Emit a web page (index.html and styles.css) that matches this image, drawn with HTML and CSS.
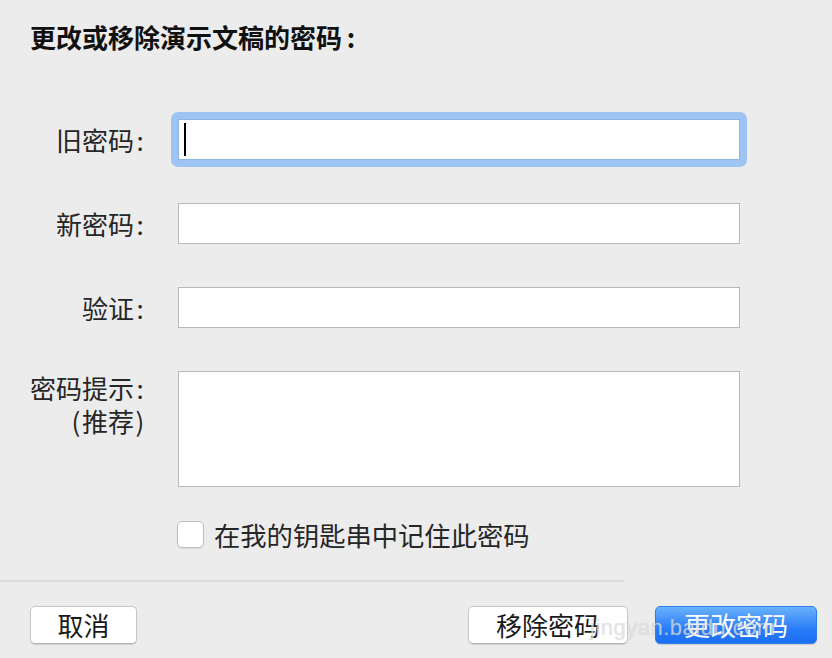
FILE: index.html
```html
<!DOCTYPE html>
<html lang="zh-CN">
<head>
<meta charset="utf-8">
<title>更改或移除演示文稿的密码</title>
<link rel="stylesheet" href="styles.css">
</head>
<body>
<div class="dialog">
  <h1 class="title">更改或移除演示文稿的密码<span class="colon colon-title">:</span></h1>
  <div class="form">
    <label class="label">旧密码<span class="colon">:</span></label>
    <div class="focus-ring"><div class="field field-focused"><span class="caret"></span></div></div>

    <label class="label">新密码<span class="colon">:</span></label>
    <div class="field"></div>

    <label class="label">验证<span class="colon">:</span></label>
    <div class="field"></div>

    <label class="label label-top">
      <span class="label-line">密码提示<span class="colon">:</span></span>
      <span class="label-line"><span class="paren">(</span>推荐<span class="paren">)</span></span>
    </label>
    <div class="field field-area"></div>
  </div>

  <div class="check-row">
    <span class="checkbox"></span>
    <span class="check-text">在我的钥匙串中记住此密码</span>
  </div>

  <div class="separator"></div>

  <div class="footer">
    <button class="btn btn-cancel">取消</button>
    <div class="spacer"></div>
    <button class="btn btn-remove">移除密码</button>
    <button class="btn btn-primary">更改密码</button>
  </div>
  <div class="watermark">jingyan.baidu.com</div>
</div>
</body>
</html>
```

FILE: styles.css
```css
html, body {
  margin: 0;
  padding: 0;
  background: #ececec;
}

body {
  width: 832px;
  height: 658px;
  overflow: hidden;
  font-family: "Noto Sans CJK SC", "Noto Sans", sans-serif;
  color: #222222;
}

.dialog {
  position: relative;
  padding-top: 20px;
  height: 638px;
}

.title {
  margin: 0 0 0 30px;
  font-size: 26px;
  line-height: 34px;
  font-weight: 700;
  color: #111111;
}

.colon {
  display: inline-block;
  width: 12px;
  text-align: center;
}

.colon-title {
  width: 18px;
}

.form {
  margin-top: 65px;
  display: grid;
  grid-template-columns: 146px 562px;
  grid-auto-rows: 41px;
  column-gap: 32px;
  row-gap: 43px;
}

.label {
  font-size: 26px;
  line-height: 33px;
  text-align: right;
  align-self: center;
  color: #262626;
  white-space: nowrap;
}

.label-top {
  align-self: start;
}

.label-line {
  display: block;
}

.paren {
  display: inline-block;
  width: 12px;
  text-align: center;
}

.field {
  box-sizing: border-box;
  height: 41px;
  background: #ffffff;
  border: 1px solid #b9b9b9;
}

.field-area {
  height: 116px;
}

.focus-ring {
  margin: -7px;
  padding: 7px;
  background: #9dc4f3;
  border-radius: 7px;
  height: 41px;
}

.field-focused {
  border-color: #8cb4ea;
  display: flex;
  align-items: center;
  padding-left: 5px;
}

.caret {
  display: block;
  width: 2px;
  height: 33px;
  background: #000000;
}

.check-row {
  margin-top: 109px;
  margin-left: 177px;
  display: flex;
  align-items: center;
  gap: 10px;
  height: 27px;
}

.checkbox {
  box-sizing: border-box;
  width: 27px;
  height: 27px;
  background: #ffffff;
  border: 1px solid #bdbdbd;
  border-radius: 5px;
  box-shadow: 0 1px 1px rgba(0, 0, 0, 0.08);
}

.check-text {
  font-size: 26.3px;
  line-height: 33px;
  color: #262626;
}

.separator {
  margin-top: 32px;
  width: 624px;
  height: 2px;
  background: #d9d9d9;
}

.footer {
  margin-top: 24px;
  display: flex;
  align-items: flex-start;
  padding: 0 15px 0 30px;
  gap: 27px;
}

.spacer {
  flex: 1;
}

.btn {
  box-sizing: border-box;
  height: 38px;
  padding: 0;
  font-family: "Noto Sans CJK SC", "Noto Sans", sans-serif;
  font-size: 26px;
  line-height: 36px;
  color: #1a1a1a;
  background: #ffffff;
  border: 1px solid #c6c6c6;
  border-bottom-color: #b0b0b0;
  border-radius: 5px;
  box-shadow: 0 1px 1px rgba(0, 0, 0, 0.12);
}

.btn-cancel {
  width: 107px;
}

.btn-remove {
  width: 160px;
}

.btn-primary {
  width: 162px;
  color: #ffffff;
  border: 1px solid #2f7ef0;
  background: linear-gradient(#6ab2fc, #2a7df7 60%, #1a6ff3);
}

.watermark {
  position: absolute;
  left: 590px;
  top: 614px;
  font-family: "Liberation Sans", sans-serif;
  font-size: 22px;
  line-height: 28px;
  color: rgba(230, 230, 230, 0.7);
  text-shadow: 0 0 1px rgba(140, 140, 140, 0.3);
  letter-spacing: 0.5px;
  pointer-events: none;
}
```
